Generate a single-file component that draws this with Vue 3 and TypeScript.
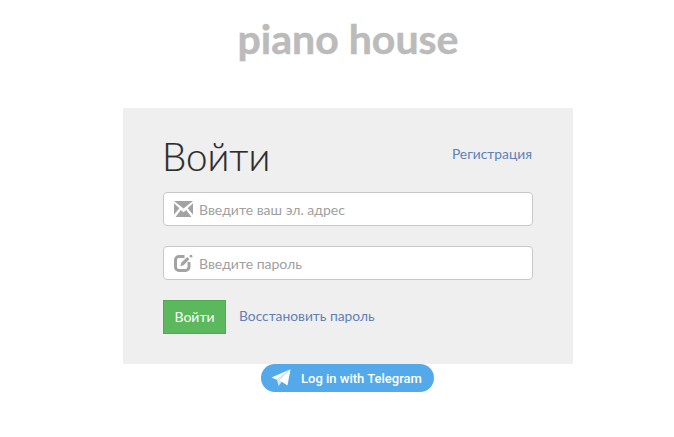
<template>
  <div class="page">
    <h1 class="logo">piano house</h1>
    <form class="login-box" @submit.prevent>
      <div class="login-head">
        <h2>Войти</h2>
        <a href="#" class="link register">Регистрация</a>
      </div>
      <label class="field">
        <svg class="field-icon" width="19" height="16" viewBox="0 0 19 16" fill="#a3a3a3">
          <path d="M0 0h19L9.500 7.600z" />
          <path d="M0 2.200v11.600l5.400-6.600z" />
          <path d="M19 2.200v11.600l-5.400-6.600z" />
          <path d="M1.500 16h16l-5.300-7-2.700 2.200L6.800 9z" />
        </svg>
        <input type="text" placeholder="Введите ваш эл. адрес" />
      </label>
      <label class="field">
        <svg class="field-icon" width="19" height="18" viewBox="0 0 19 18">
          <path d="M10.500 2.500H5A3.500 3.500 0 0 0 1.500 6V13A3.500 3.500 0 0 0 5 16.500h6.500A3.500 3.500 0 0 0 15 13V8" fill="none" stroke="#a3a3a3" stroke-width="3" />
          <path d="M6.300 12.200l.9-3.400 6-5.800 2.300 2.300-5.900 6z" fill="#a3a3a3" />
          <circle cx="17" cy="2.200" r="1.400" fill="#a3a3a3" />
        </svg>
        <input type="password" placeholder="Введите пароль" />
      </label>
      <div class="actions">
        <button type="submit" class="btn-login">Войти</button>
        <a href="#" class="link">Восстановить пароль</a>
      </div>
    </form>
    <button type="button" class="btn-telegram">
      <svg width="20" height="18" viewBox="0 0 20 18">
        <path d="M19.500 0.300L0.500 8.400l5.300 2.300z" fill="#fff" />
        <path d="M19.500 0.300L5.800 10.700l1.900 6.300z" fill="#d6e8f6" />
        <path d="M19.500 0.300L8.700 11.500l7.800 5z" fill="#fff" />
      </svg>
      <span>Log in with Telegram</span>
    </button>
  </div>
</template>

<script setup lang="ts">
</script>

<style>
html,
body {
  background: #fff;
}
</style>

<style scoped>
.page {
  width: 450px;
  margin-left: 123px;
  display: flex;
  flex-direction: column;
  align-items: center;
  font-family: "Lato", "Liberation Sans", sans-serif;
}

.logo {
  margin: 14px 0 0;
  height: 94px;
  font-size: 41px;
  line-height: 50px;
  font-weight: 700;
  color: #bbb;
  -webkit-text-stroke: 0.5px #bbb;
}

.login-box {
  width: 100%;
  height: 256px;
  box-sizing: border-box;
  padding: 27px 41px 0 40px;
  background: #efefef;
}

.login-head {
  height: 57px;
  display: flex;
  justify-content: space-between;
}

.login-head h2 {
  margin: 0 0 0 -1px;
  font-size: 38.5px;
  line-height: 42px;
  font-weight: 300;
  color: #2c2c2c;
  -webkit-text-stroke: 0.2px #2c2c2c;
}

.link {
  font-size: 13.8px;
  color: #5f80b8;
  text-decoration: none;
}

.register {
  margin-top: 10px;
  line-height: 18px;
}

.field {
  width: 370px;
  height: 34px;
  margin-bottom: 20px;
  padding: 0 10px;
  box-sizing: border-box;
  display: flex;
  align-items: center;
  gap: 6px;
  background: #fff;
  border: 1px solid #c8c8c8;
  border-radius: 4px;
}

.field-icon {
  flex: none;
}

.field input {
  flex: 1;
  min-width: 0;
  border: 0;
  padding: 0;
  outline: none;
  background: transparent;
  font-family: inherit;
  font-size: 14px;
  color: #555;
}

.field input::placeholder {
  color: #a0a0a0;
  opacity: 1;
}

.actions {
  display: flex;
  align-items: center;
  gap: 13px;
  line-height: 30px;
}

.actions .link {
  margin-top: -2px;
}

.btn-login {
  width: 63px;
  height: 34px;
  padding: 0 0 2px;
  background: #5cb85c;
  border: 1px solid #4cae4c;
  color: #fff;
  font-family: inherit;
  font-size: 14px;
  font-weight: 400;
}

.btn-telegram {
  align-self: flex-start;
  margin-left: 138px;
  width: 173px;
  height: 28px;
  padding: 0 0 0 10px;
  display: flex;
  align-items: center;
  gap: 10px;
  border: 0;
  border-radius: 14px;
  background: #54a9eb;
  color: #fff;
  font-family: "Roboto", sans-serif;
  font-size: 13px;
  font-weight: 500;
  white-space: nowrap;
}
</style>
